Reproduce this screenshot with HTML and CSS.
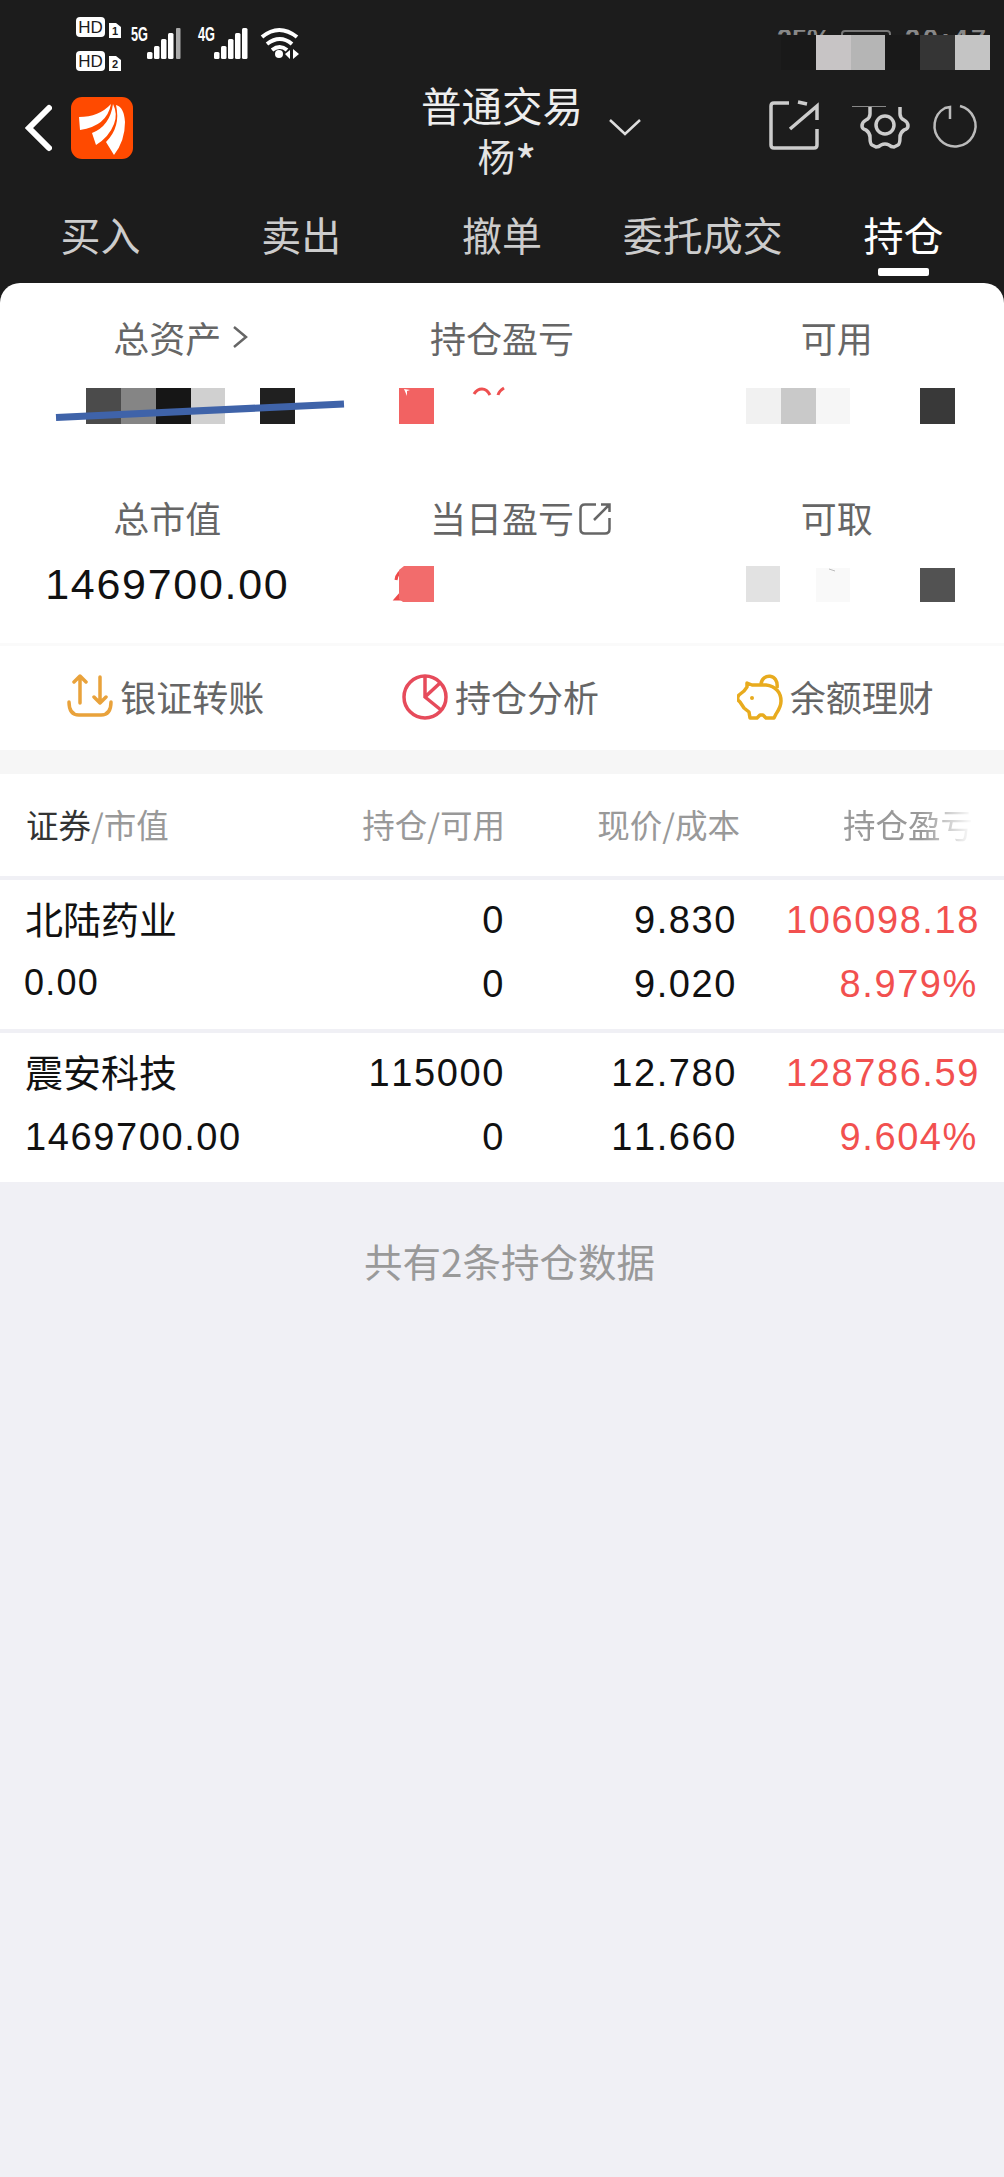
FILE: index.html
```
<!DOCTYPE html>
<html lang="zh-CN">
<head>
    <meta charset="UTF-8">
    <meta name="viewport" content="width=device-width, initial-scale=1.0">
    <title>普通交易 - 持仓</title>
    <link rel="stylesheet" href="styles.css">
</head>
<body>
    <header class="header">
        <div class="status-bar">
            <svg class="signals" width="226" height="60" viewBox="0 0 226 60" fill="#fff">
                <rect x="0" y="2" width="29" height="20" rx="4"/>
                <rect x="0" y="36" width="29" height="20" rx="4"/>
                <text class="hd" x="14.5" y="18">HD</text>
                <text class="hd" x="14.5" y="52">HD</text>
                <path d="M33 8h7l5 4v11h-12zM33 41h7l5 4v11h-12z"/>
                <text class="sim" x="39" y="20">1</text>
                <text class="sim" x="39" y="53">2</text>
                <text class="net" x="55" y="26" textLength="17" lengthAdjust="spacingAndGlyphs">5G</text>
                <text class="net" x="122" y="26" textLength="17" lengthAdjust="spacingAndGlyphs">4G</text>
                <rect x="71" y="37" width="5.5" height="7" rx="1.5"/>
                <rect x="78" y="31" width="5.5" height="13" rx="1.5"/>
                <rect x="85" y="24" width="5.5" height="20" rx="1.5"/>
                <rect x="92" y="18" width="5.5" height="26" rx="1.5"/>
                <rect x="100" y="13" width="4.5" height="31" rx="1" fill="#aaa"/>
                <rect x="138" y="37" width="5.5" height="7" rx="1.5"/>
                <rect x="145" y="31" width="5.5" height="13" rx="1.5"/>
                <rect x="152" y="24" width="5.5" height="20" rx="1.5"/>
                <rect x="159" y="18" width="5.5" height="26" rx="1.5"/>
                <rect x="166" y="13" width="5.5" height="31" rx="1.5"/>
                <g fill="none" stroke="#fff" stroke-width="4">
                    <path d="M186 22q17-14 35 0M191 29q13-10 25 0M196 35q8-6 15 0"/>
                </g>
                <circle cx="203" cy="39" r="4"/>
                <path d="M209 39l5-4v9zM217 34l6 5-6 5z"/>
            </svg>
            <div class="status-right">
                <div class="clipped"><span>25%</span><i class="battery"></i><span class="time">20:47</span></div>
                <div class="mosaic">
                    <i class="m-bg"></i><i class="m-c7"></i><i class="m-b5"></i><i class="m-bg"></i><i class="m-35"></i><i class="m-c5"></i>
                </div>
            </div>
        </div>
        <div class="nav">
            <div class="nav-left">
                <svg width="27" height="48" viewBox="0 0 27 48" fill="none" stroke="#fff" stroke-width="6" stroke-linecap="round"><path d="M24 4L4 24l20 20"/></svg>
                <svg class="logo" width="62" height="62" viewBox="0 0 62 62">
                    <rect width="62" height="62" rx="11" fill="#ff4a00"/>
                    <g fill="#fff">
                        <path d="M8 20Q28 20 40 7Q36 29 9 33z"/>
                        <path d="M21 36Q39 29 42 7Q47 17 43 27Q38 40 25 48z"/>
                        <path d="M35 45Q50 30 45 8Q53 10 54 25Q54 44 43 58z"/>
                    </g>
                </svg>
            </div>
            <div class="account">
                <div class="account-type">普通交易</div>
                <div class="account-name">杨<span class="star">*</span></div>
                <svg class="account-arrow" width="32" height="18" viewBox="0 0 32 18" fill="none" stroke="#ddd" stroke-width="2.5"><path d="M1 1l15 14L31 1"/></svg>
            </div>
            <div class="nav-right">
                <svg width="50" height="50" viewBox="0 0 50 50" fill="none" stroke="#ccc" stroke-width="3.5">
                    <path d="M20 3H5q-3 0-3 3v39q0 3 3 3h40q3 0 3-3V29M29 2l9 2M48 20V6L21 29"/>
                </svg>
                <svg width="50" height="46" viewBox="0 0 50 46" fill="none" stroke="#ccc" stroke-width="3.5" stroke-linejoin="round">
                    <path d="M10 2v7q0 4-4 6t-4 6q0 3 4 4 4 3 4 7 0 7 2 8l4 2q3 0 5-2 4-2 8 0 2 2 5 2l4-2q2-1 2-8 0-4 4-7 4-1 4-4 0-4-4-6t-4-6V2"/>
                    <circle cx="25" cy="20" r="9"/>
                    <path d="M-8 1.500h34" stroke-width="1" stroke="#888"/>
                </svg>
                <svg width="46" height="46" viewBox="0 0 46 46" fill="none" stroke="#bbb" stroke-width="2.5">
                    <path d="M27 1a20.500 20.500 0 1 1-15 2l5-1v12"/>
                </svg>
            </div>
        </div>
        <nav class="tabs">
            <a>买入</a>
            <a>卖出</a>
            <a>撤单</a>
            <a>委托成交</a>
            <a class="active">持仓</a>
        </nav>
    </header>

    <main class="card">
        <section class="summary">
            <div class="cell">
                <div class="label">总资产<svg class="after chevron" width="16" height="24" viewBox="0 0 16 24" fill="none" stroke="#666" stroke-width="2.5"><path d="M2 2l12 10L2 22"/></svg></div>
                <svg class="masked" width="334" height="36" viewBox="0 0 334 36">
                    <rect x="86" width="35" height="36" fill="#4b4b4b"/>
                    <rect x="121" width="35" height="36" fill="#858585"/>
                    <rect x="156" width="35" height="36" fill="#161616"/>
                    <rect x="191" width="34" height="36" fill="#d0d0d0"/>
                    <rect x="260" width="35" height="36" fill="#202020"/>
                    <path d="M56 29.500L344 16" stroke="#3f63a9" stroke-width="7"/>
                </svg>
            </div>
            <div class="cell">
                <div class="label">持仓盈亏</div>
                <svg class="masked" width="334" height="36" viewBox="0 0 334 36">
                    <rect x="64" width="35" height="36" fill="#f26262"/>
                    <path d="M69 1l3 7v-5l3-1" fill="#fff"/>
                    <path d="M139 6q3-5 8-5t8 6M163 7q1-4 6-7" fill="none" stroke="#ee5050" stroke-width="3"/>
                </svg>
            </div>
            <div class="cell">
                <div class="label">可用</div>
                <svg class="masked" width="334" height="36" viewBox="0 0 334 36">
                    <rect x="77" width="35" height="36" fill="#f1f1f1"/>
                    <rect x="112" width="35" height="36" fill="#c9c9c9"/>
                    <rect x="147" width="34" height="36" fill="#f6f6f6"/>
                    <rect x="251" width="35" height="36" fill="#393939"/>
                </svg>
            </div>
            <div class="cell">
                <div class="label">总市值</div>
                <div class="total">1469700.00</div>
            </div>
            <div class="cell">
                <div class="label">当日盈亏<svg class="after" width="32" height="32" viewBox="0 0 32 32" fill="none" stroke="#666" stroke-width="2.500"><path d="M17 1.500H6Q1.500 1.500 1.500 6v20q0 4.500 4.500 4.500h20q4.500 0 4.500-4.500V15M22 1.500h8.500V9M30 2L15 17"/></svg></div>
                <svg class="masked" width="334" height="36" viewBox="0 0 334 36">
                    <path d="M61 14q1-8 8-10M68 25l-7 8h8" fill="none" stroke="#ee4a4a" stroke-width="3"/>
                    <path d="M69 0h30v36H68l-4-3V4z" fill="#f26c6c"/>
                </svg>
            </div>
            <div class="cell">
                <div class="label">可取</div>
                <svg class="masked" width="334" height="36" viewBox="0 0 334 36">
                    <rect x="77" width="34" height="36" fill="#e2e2e2"/>
                    <rect x="147" y="2" width="34" height="34" fill="#f9f9f9"/>
                    <path d="M160 3l6 2" stroke="#bbb"/>
                    <rect x="251" y="2" width="35" height="34" fill="#525252"/>
                </svg>
            </div>
        </section>

        <section class="actions">
            <div class="action">
                <svg width="46" height="46" viewBox="0 0 46 46" fill="none" stroke="#e9a23b" stroke-width="3.500" stroke-linecap="round" stroke-linejoin="round">
                    <path d="M13 29V3M7 8l6-6 6 6M33 3v26M27 23l6 6 6-6M2 28q0 13 10 13h22q10 0 10-13"/>
                </svg>
                <span>银证转账</span>
            </div>
            <div class="action">
                <svg width="46" height="46" viewBox="0 0 46 46" fill="none" stroke="#e64b5b" stroke-width="3.500">
                    <circle cx="23" cy="23" r="21"/>
                    <path d="M23 2v21l16 13M23 23L38 9"/>
                </svg>
                <span>持仓分析</span>
            </div>
            <div class="action">
                <svg width="46" height="46" viewBox="0 0 46 46" fill="none" stroke="#e8ab1e" stroke-width="3.500" stroke-linejoin="round">
                    <path d="M10 9l5 2h14c10 1 15 8 15 16 0 6-3 10-5 13l-2 4h-8l-3-3h-3l-3 3h-7l-1-6-5-4-4-6-2-2q-1-3 1-5l5-4 3-4z"/>
                    <path d="M24 10c1-11 18-11 16 4"/>
                    <circle cx="15" cy="24" r="2" fill="#e8ab1e" stroke="none"/>
                </svg>
                <span>余额理财</span>
            </div>
        </section>

        <section class="holdings">
            <div class="row head">
                <span><b>证券</b>/市值</span>
                <span>持仓/可用</span>
                <span>现价/成本</span>
                <span class="fade">持仓盈亏</span>
            </div>
            <div class="row">
                <span class="name">北陆药业</span>
                <span>0</span>
                <span>9.830</span>
                <span class="red">106098.18</span>
                <span class="small">0.00</span>
                <span>0</span>
                <span>9.020</span>
                <span class="red percent">8.979%</span>
            </div>
            <div class="row">
                <span class="name">震安科技</span>
                <span>115000</span>
                <span>12.780</span>
                <span class="red">128786.59</span>
                <span>1469700.00</span>
                <span>0</span>
                <span>11.660</span>
                <span class="red percent">9.604%</span>
            </div>
        </section>
    </main>

    <p class="count">共有2条持仓数据</p>
</body>
</html>
```
FILE: styles.css
```
* {
    box-sizing: border-box;
}
body {
    margin: 0;
    width: 1004px;
    min-height: 2177px;
    background: #f0f0f5;
    font-family: "Noto Sans CJK SC", sans-serif;
    color: #111;
}
svg {
    display: block;
    flex: none;
}
.header {
    height: 303px;
    background: #1c1c1c;
    color: #ccc;
}

/* status bar */
.status-bar {
    height: 86px;
    padding: 15px 14px 0 76px;
    display: flex;
    justify-content: space-between;
}
.signals text {
    font-family: "Liberation Sans", sans-serif;
}
.hd {
    font-size: 17px;
    text-anchor: middle;
    fill: #1c1c1c;
}
.signals .sim {
    font-size: 11px;
    font-weight: bold;
    text-anchor: middle;
    fill: #1c1c1c;
}
.net {
    font-size: 20px;
    font-weight: bold;
}
.status-right {
    width: 213px;
    padding-top: 15px;
}
.clipped {
    height: 5px;
    overflow: hidden;
    display: flex;
    font: bold 27px/27px "Liberation Sans", sans-serif;
    color: #888;
}
.clipped span {
    margin-top: -4px;
}
.clipped .time {
    margin-left: 14px;
    letter-spacing: 3px;
}
.battery {
    width: 50px;
    height: 20px;
    margin-left: 10px;
    border: 2px solid #777;
    border-radius: 4px;
}
.mosaic {
    display: flex;
    padding-left: 4px;
}
.mosaic i {
    flex: 1;
    height: 35px;
}
.m-bg { background: #191919; }
.m-c7 { background: #c7c4c5; }
.m-b5 { background: #b5b5b5; }
.m-35 { background: #353535; }
.m-c5 { background: #c4c4c4; }

/* nav bar */
.nav {
    height: 104px;
    padding: 0 25px;
    display: grid;
    grid-template-columns: 1fr auto 1fr;
}
.nav-left {
    display: flex;
    gap: 19px;
    padding-top: 11px;
}
.nav-left svg:first-child {
    margin-top: 7px;
}
.account {
    position: relative;
    margin-top: -2px;
    text-align: center;
}
.account-type {
    font-size: 40.5px;
    line-height: 42px;
    color: #eee;
}
.account-name {
    font-size: 37.5px;
    line-height: 58px;
    color: #e4e4e4;
    margin-left: 10px;
}
.star {
    font-size: 46px;
    line-height: 0;
    vertical-align: -9px;
}
.account-arrow {
    position: absolute;
    left: 188px;
    top: 35px;
}
.nav-right {
    display: flex;
    justify-content: flex-end;
    padding-top: 15px;
}
.nav-right svg:first-child {
    margin-top: -1px;
}
.nav-right svg + svg {
    margin: 4px 0 0 41px;
    overflow: visible;
}
.nav-right svg:last-child {
    margin-left: 23px;
}

/* tabs */
.tabs {
    height: 93px;
    display: grid;
    grid-template-columns: repeat(5, 1fr);
    text-align: center;
    font-size: 40px;
    line-height: 88px;
}
.tabs a {
    display: flex;
    flex-direction: column;
    align-items: center;
}
.tabs .active {
    color: #fff;
}
.tabs .active::after {
    content: "";
    width: 51px;
    height: 8px;
    margin-top: -10px;
    border-radius: 2px;
    background: #fff;
}

/* account summary */
.card {
    margin-top: -20px;
    background: #fff;
    border-radius: 20px 20px 0 0;
}
.summary {
    height: 363px;
    display: grid;
    grid-template-columns: repeat(3, 1fr);
    grid-template-rows: 180px 1fr;
    border-bottom: 3px solid #fafafa;
}
.cell {
    padding-top: 29px;
    text-align: center;
}
.label {
    position: relative;
    width: max-content;
    margin: 0 auto;
    font-size: 36px;
    line-height: 50px;
    color: #666;
}
.after {
    position: absolute;
    left: 100%;
    top: 11px;
    margin-left: 5px;
}
.chevron {
    top: 13px;
    margin-left: 11px;
}
.masked {
    margin-top: 26px;
    overflow: visible;
}
.cell:nth-child(n+4) .masked {
    margin-top: 24px;
}
.total {
    margin-top: 16px;
    font-family: "Liberation Sans", sans-serif;
    font-size: 43px;
    font-kerning: none;
    letter-spacing: 1.7px;
    line-height: 52px;
}
.actions {
    height: 104px;
    padding-bottom: 3px;
    display: grid;
    grid-template-columns: repeat(3, 1fr);
}
.action {
    display: flex;
    justify-content: center;
    align-items: center;
    gap: 7px;
    padding-right: 3px;
    font-size: 36px;
    color: #666;
}
.action span {
    margin-top: -2px;
}

/* holdings */
.holdings {
    border-top: 24px solid #f6f6f6;
}
.row {
    height: 153px;
    padding: 8px 24px 0 25px;
    display: grid;
    grid-template-columns: 280px 200px 232px 1fr;
    grid-auto-rows: 64px;
    text-align: right;
    line-height: 64px;
    font-family: "Liberation Sans", sans-serif;
    font-size: 38px;
    font-kerning: none;
    letter-spacing: 1.6px;
    border-bottom: 4px solid #f0f0f5;
}
.row span:nth-child(4n+1) {
    text-align: left;
}
.row .name {
    font-family: "Noto Sans CJK SC", sans-serif;
    font-size: 38px;
    letter-spacing: 0;
    line-height: 59px;
}
.row .small {
    font-size: 36px;
    letter-spacing: 1.2px;
    line-height: 61px;
    margin-left: -1px;
}
.row .percent {
    padding-right: 2px;
}
.row:last-child {
    height: 149px;
    border: 0;
}
.row.head {
    height: 106px;
    padding: 18px 31px 0 26px;
    grid-template-columns: 279px 200px 235px 1fr;
    font-family: "Noto Sans CJK SC", sans-serif;
    font-size: 32.5px;
    letter-spacing: 0;
    color: #999;
}
.head b {
    font-weight: normal;
    color: #333;
}
.head .fade {
    -webkit-mask-image: linear-gradient(to right, #000 78%, transparent);
    mask-image: linear-gradient(to right, #000 78%, transparent);
}
.red {
    color: #f2504f;
}
.count {
    margin: 48px 0 0;
    text-align: center;
    font-size: 38.5px;
    line-height: 60px;
    color: #999;
    padding-left: 15px;
}
```
